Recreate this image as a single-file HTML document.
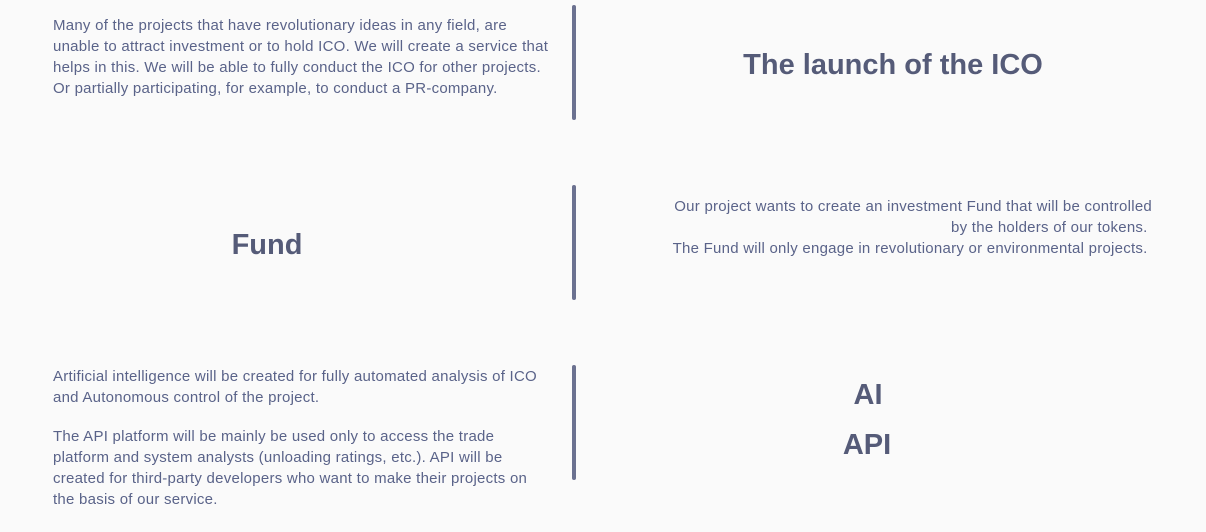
<!DOCTYPE html>
<html><head><style>
html,body{margin:0;padding:0;background:#fafafa;width:1206px;height:532px;overflow:hidden}
body{position:relative;font-family:"Liberation Sans",sans-serif;color:#5a6389}
.t{position:absolute;font-size:15px;letter-spacing:0.25px;line-height:21px;white-space:nowrap}
.bar{position:absolute;left:572px;width:4px;background:#6b7190;border-radius:2px}
.h{position:absolute;font-weight:bold;font-size:29px;color:#555b78;transform:translateX(-50%);white-space:nowrap}
</style></head><body>
<div class="t" style="left:53px;top:15px">Many of the projects that have revolutionary ideas in any field, are<br>unable to attract investment or to hold ICO. We will create a service that<br>helps in this. We will be able to fully conduct the ICO for other projects.<br>Or partially participating, for example, to conduct a PR-company.</div>
<div class="bar" style="top:5px;height:115px"></div>
<div class="h" style="left:893px;top:49px">The launch of the ICO</div>

<div class="h" style="left:267px;top:229px">Fund</div>
<div class="bar" style="top:185px;height:115px"></div>
<div class="t" style="right:54px;top:196px;text-align:right">Our project wants to create an investment Fund that will be controlled<br>by the holders of our tokens.&nbsp;<br>The Fund will only engage in revolutionary or environmental projects.&nbsp;</div>

<div class="t" style="left:53px;top:366px">Artificial intelligence will be created for fully automated analysis of ICO<br>and Autonomous control of the project.</div>
<div class="t" style="left:53px;top:426px">The API platform will be mainly be used only to access the trade<br>platform and system analysts (unloading ratings, etc.). API will be<br>created for third-party developers who want to make their projects on<br>the basis of our service.</div>
<div class="bar" style="top:365px;height:115px"></div>
<div class="h" style="left:868px;top:379px">AI</div>
<div class="h" style="left:867px;top:429px">API</div>
</body></html>
